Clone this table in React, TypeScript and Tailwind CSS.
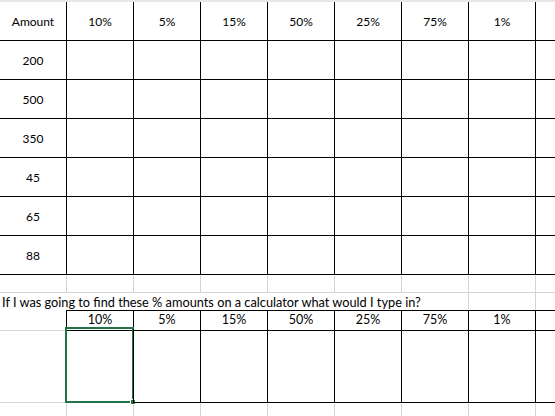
import React from "react";

const cols = ["10%", "5%", "15%", "50%", "25%", "75%", "1%"];
const amounts = ["200", "500", "350", "45", "65", "88"];

const grid = "grid grid-cols-[66px_repeat(7,67px)_1fr]";

function TopRow({ label, cells }: { label: string; cells: string[] }) {
  return (
    <div className={`${grid} h-[39px] border-b border-black`}>
      <div className="flex items-center justify-center pt-[1px]">{label}</div>
      {cells.map((c, i) => (
        <div key={i} className="flex items-center justify-center pt-[1px] border-l border-black">
          {c}
        </div>
      ))}
      <div className="border-l border-black" />
    </div>
  );
}

export default function App() {
  const blanks = cols.map(() => "");
  return (
    <div className="w-[555px] h-[416px] overflow-hidden bg-white text-[12px] text-black font-['Lato','Liberation_Sans',sans-serif]">
      <div className="h-[2px] bg-[#e6e6e6]" />

      <TopRow label="Amount" cells={cols} />
      {amounts.map((a) => (
        <TopRow key={a} label={a} cells={blanks} />
      ))}

      {/* empty spacer row */}
      <div className={`${grid} h-[18px] border-b border-[#d4d4d4]`}>
        <div />
        {cols.map((c) => (
          <div key={c} className="border-l border-[#d4d4d4]" />
        ))}
        <div className="border-l border-[#d4d4d4]" />
      </div>

      {/* question row */}
      <div className={`${grid} h-[17px]`}>
        <div className="col-span-7 flex items-center pl-[2px] whitespace-nowrap text-[12.75px]">
          If I was going to find these % amounts on a calculator what would I type in?
        </div>
        <div className="border-l border-[#d4d4d4]" />
        <div className="border-l border-[#d4d4d4]" />
      </div>

      {/* second table header */}
      <div className={`${grid} h-[19px]`}>
        <div className="mt-[1px] border-b border-[#d4d4d4]" />
        {cols.map((c) => (
          <div key={c} className="flex items-center justify-center border-l border-t border-b border-black text-[12.5px]">
            {c}
          </div>
        ))}
        <div className="border-l border-t border-b border-black" />
      </div>

      {/* answer row */}
      <div className={`${grid} h-[74px]`}>
        <div className="border-b border-[#d4d4d4]" />
        {cols.map((c, i) => (
          <div key={c} className="relative border-l border-b border-black">
            {i === 0 && (
              <div className="absolute -left-[2px] -top-[2px] w-[69px] h-[76px] border-2 border-[#217346]">
                <div className="absolute -right-[4px] -bottom-[4px] w-[6px] h-[6px] bg-[#217346] border border-white" />
              </div>
            )}
          </div>
        ))}
        <div className="border-l border-b border-black" />
      </div>

      {/* trailing grid */}
      <div className={`${grid} h-[14px]`}>
        <div />
        {cols.map((c) => (
          <div key={c} className="border-l border-[#d4d4d4]" />
        ))}
        <div className="border-l border-[#d4d4d4]" />
      </div>
    </div>
  );
}
